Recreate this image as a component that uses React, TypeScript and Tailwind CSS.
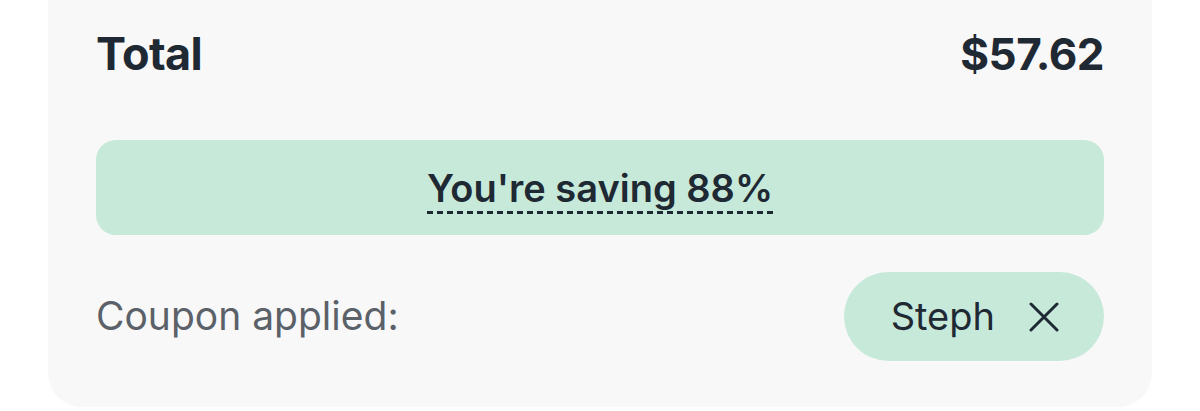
import React from "react";

const CloseIcon = () => (
  <svg width="30" height="30" viewBox="0 0 30 30" fill="none" stroke="currentColor" strokeWidth="3" strokeLinecap="round">
    <path d="M2 2 L28 28 M28 2 L2 28" />
  </svg>
);

const App: React.FC = () => {
  return (
    <div className="min-h-[411px] w-[1200px] bg-white font-['Inter',sans-serif] text-[#1f2933]">
      <div className="mx-12 rounded-b-[34px] bg-[#f8f8f8] px-12 pt-[30px] pb-[46px]">
        {/* Total */}
        <div className="flex h-12 items-center justify-between">
          <span className="text-[45px] font-bold tracking-[-0.6px]">Total</span>
          <span className="text-[44px] font-bold tracking-[-0.5px]">$57.62</span>
        </div>

        {/* Savings */}
        <div className="mt-[62px] flex h-[95px] items-center justify-center rounded-[20px] bg-[#c7e9da]">
          <span className="relative text-[38px] font-semibold leading-none after:absolute after:left-0 after:right-0 after:-bottom-[7px] after:h-[3px] after:bg-[repeating-linear-gradient(to_right,#1f2933_0_6px,transparent_6px_10px)] after:content-['']">
            You're saving 88%
          </span>
        </div>

        {/* Coupon */}
        <div className="mt-[37px] flex h-[89px] items-center justify-between">
          <span className="text-[39px] text-[#5b6168]">Coupon applied:</span>
          <button className="flex h-[89px] items-center gap-[34px] rounded-full bg-[#c7e9da] pl-[47px] pr-[45px] text-[38px] text-[#1f2933]">
            Steph
            <CloseIcon />
          </button>
        </div>
      </div>
    </div>
  );
};

export default App;
